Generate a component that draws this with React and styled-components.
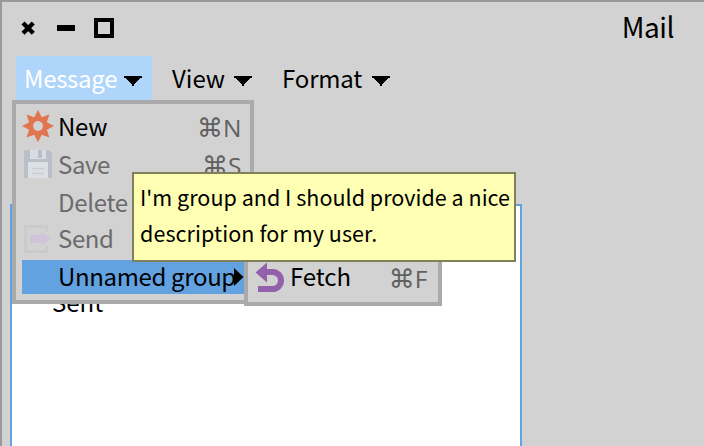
import React from "react";
import styled, { createGlobalStyle } from "styled-components";

const Global = createGlobalStyle`
  * { box-sizing: border-box; }
  body { margin: 0; overflow: hidden; }
`;

const Window = styled.main`
  position: relative;
  display: flex;
  flex-direction: column;
  width: 704px;
  height: 446px;
  overflow: hidden;
  background: #d2d2d2;
  border-top: 2px solid #999;
  border-left: 2px solid #999;
  font-family: "Noto Sans CJK SC", "Noto Sans", sans-serif;
  font-size: 24px;
  color: #000;
`;

const TitleBar = styled.header`
  display: flex;
  align-items: flex-start;
  justify-content: space-between;
  height: 54px;
  padding: 0 30px 0 18px;
`;

const Controls = styled.div`
  display: flex;
  align-items: center;
  height: 52px;
`;

const Label = styled.span`
  display: block;
  white-space: pre;
  line-height: 36px;
  font-size: ${(p) => p.$size || 24}px;
  letter-spacing: ${(p) => p.$track || 0}px;
  margin-top: ${(p) => p.$shift || 0}px;
`;

const MenuBar = styled.nav`
  display: flex;
  height: 46px;
  padding-left: 14px;
`;

const MenuButton = styled.div`
  display: flex;
  align-items: flex-start;
  justify-content: space-between;
  width: ${(p) => p.$width}px;
  padding: 4px ${(p) => (p.$active ? "10px 0 8px" : "9px 0 9px")};
  margin-right: ${(p) => p.$gap || 0}px;
  background: ${(p) => (p.$active ? "#afd5fa" : "transparent")};
  color: ${(p) => (p.$active ? "#fff" : "#000")};
  svg { margin-top: 16px; flex: none; }
`;

const Pane = styled.section`
  width: 512px;
  flex: 1;
  margin: 102px 0 0 8px;
  padding: 78px 0 0 40px;
  border: 2px solid #62a2e0;
  border-bottom: 0;
  background: #fff;
`;

const Menu = styled.div`
  position: absolute;
  left: ${(p) => p.$x}px;
  top: ${(p) => p.$y}px;
  width: ${(p) => p.$w}px;
  height: ${(p) => p.$h}px;
  padding: 4px 0 0 6px;
  border: 4px solid #aaa;
  background: #d2d2d2;
`;

const Row = styled.div`
  display: grid;
  grid-template-columns: 36px 1fr auto;
  height: ${(p) => p.$h || 38}px;
  padding-right: ${(p) => p.$pad ?? 8}px;
  color: ${(p) => (p.$dim ? "#6b6b6b" : "#000")};
  background: ${(p) => (p.$selected ? "#62a2e0" : "transparent")};
  > svg { display: block; }
`;

const Keys = styled.span`
  display: flex;
  align-items: baseline;
  height: 36px;
  color: #606060;
  font-family: "Open Sans", sans-serif;
  font-size: 24.5px;
  line-height: 36px;
  margin: 2px 0.5px 0 0;
`;

const CommandKey = styled.span`
  font-family: "DejaVu Sans", sans-serif;
  font-size: 26px;
  line-height: 30px;
`;

const Shortcut = ({ letter }) => (
  <Keys><CommandKey>⌘</CommandKey>{letter}</Keys>
);

const Tooltip = styled.div`
  position: absolute;
  left: 130px;
  top: 170px;
  width: 384px;
  height: 90px;
  padding: 5px 0 0 6px;
  border: 2px solid #80805a;
  background: #ffffb3;
`;

const Caret = () => (
  <svg width="18" height="10" viewBox="0 0 18 10" shapeRendering="crispEdges">
    <path d="M0 0h18v2h-2v1h-1v1h-1v1h-1v1h-1v1h-1v1h-1v2h-2v-2h-1v-1h-1v-1h-1v-1h-1v-1h-1v-1h-1v-1h-2z" />
  </svg>
);

const WindowButtons = () => (
  <svg width="96" height="24" viewBox="20 16 96 24">
    <path d="M23 22.900l10.300 10.300M33.300 22.900l-10.300 10.300" stroke="#000" strokeWidth="4.300" />
    <path d="M57 25h18v6h-18z" />
    <path d="M96 20h16v16h-16z" fill="none" stroke="#000" strokeWidth="4" />
  </svg>
);

const starPoints = Array.from({ length: 16 }, (_, i) => {
  const r = i % 2 ? 9.6 : 16.2;
  const a = (i * Math.PI) / 8;
  return `${16 + r * Math.cos(a)},${16 + r * Math.sin(a)}`;
}).join(" ");

const NewIcon = () => (
  <svg width="32" height="36" viewBox="0 -2 32 36">
    <polygon points={starPoints} fill="#e07650" />
    <circle cx="16" cy="16" r="4.9" fill="#d2d2d2" />
  </svg>
);

const SaveIcon = () => (
  <svg width="32" height="36" viewBox="22 148 32 36">
    <path d="M24 152h25l3 3v25h-28z" fill="#bac0ca" />
    <path d="M30 152h16v9h-16z" fill="#d9dce1" />
    <path d="M38 152h4v8h-4z" fill="#b8bec8" />
    <path d="M28 164h20v16h-20z" fill="#dcdfe4" />
    <path d="M32 170.500h12M32 175.500h12" stroke="#cbcfd5" strokeWidth="1.500" />
  </svg>
);

const SendIcon = () => (
  <svg width="32" height="36" viewBox="22 222 32 36">
    <path d="M46.500 233v-5.500h-21v25h21v-5.500" fill="none" stroke="#cbcbcb" strokeWidth="3" />
    <path d="M30 236h11v-4l9.500 8-9.500 8v-4h-11z" fill="#d0c3da" />
  </svg>
);

const FetchIcon = () => (
  <svg width="32" height="36" viewBox="254 259 32 36">
    <path d="M266 272h6.500a8.500 8.500 0 0 1 0 17h-14.500" fill="none" stroke="#9360ab" strokeWidth="6" />
    <path d="M255.500 272.500l11.500-10v20z" fill="#9360ab" />
  </svg>
);

const SubmenuArrow = styled.svg`
  position: absolute;
  left: 218px;
  top: 164px;
`;

export default function App() {
  return (
    <>
      <Global />
      <Window>
        <TitleBar>
          <Controls><WindowButtons /></Controls>
          <Label $size={28} $track={-0.5} $shift={6}>Mail</Label>
        </TitleBar>
        <MenuBar>
          <MenuButton $active $width={136} $gap={11}><Label $track={-0.3}>Message</Label><Caret /></MenuButton>
          <MenuButton $width={98} $gap={12}><Label>View</Label><Caret /></MenuButton>
          <MenuButton $width={126}><Label $track={-0.15}>Format</Label><Caret /></MenuButton>
        </MenuBar>
        <Pane><Label>Sent</Label></Pane>

        <Menu $x={10} $y={98} $w={242} $h={204}>
          <Row><NewIcon /><Label $track={-0.3}>New</Label><Shortcut letter="N" /></Row>
          <Row $dim><SaveIcon /><Label $track={-0.4}>Save</Label><Shortcut letter="S" /></Row>
          <Row $dim $h={37}><i /><Label $track={-0.3}>Delete</Label></Row>
          <Row $dim $h={39}><SendIcon /><Label $track={-0.4} $shift={-1}>Send</Label></Row>
          <Row $selected $h={34}><i /><Label $track={-0.35} $shift={-2}>Unnamed group</Label></Row>
          <SubmenuArrow width="10" height="18" viewBox="0 0 10 18">
            <path d="M0 0l9.500 9-9.500 9z" />
          </SubmenuArrow>
        </Menu>

        <Menu $x={242} $y={249} $w={198} $h={55}>
          <Row $pad={10}><FetchIcon /><Label $track={-0.1} $shift={-1}>Fetch</Label><Shortcut letter="F" /></Row>
        </Menu>

        <Tooltip>
          <Label $size={21.5} $track={0.02}>I'm group and I should provide a nice</Label>
          <Label $size={21.5} $track={0.08}>description for my user.</Label>
        </Tooltip>
      </Window>
    </>
  );
}
